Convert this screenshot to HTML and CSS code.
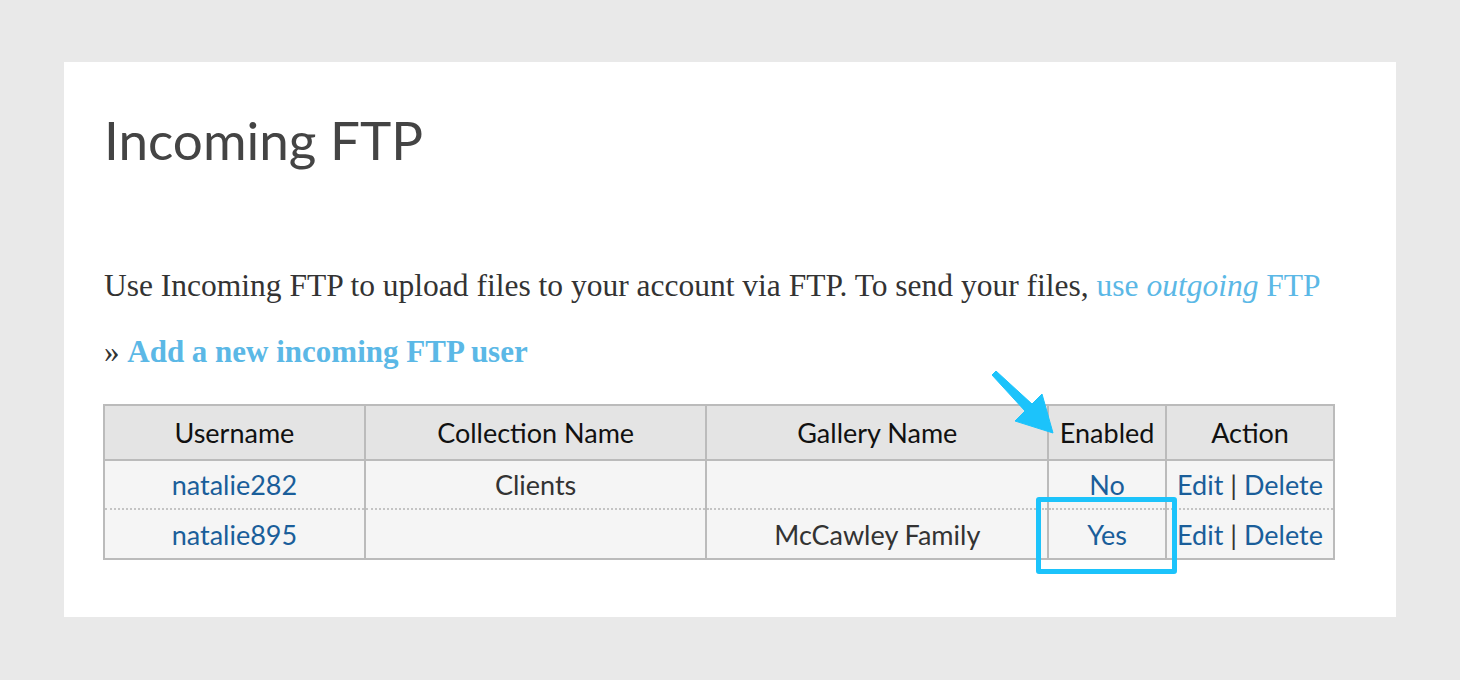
FILE: index.html
```html
<!DOCTYPE html>
<html lang="en">
<head>
  <meta charset="UTF-8">
  <title>Incoming FTP</title>
  <link rel="stylesheet" href="styles.css">
</head>
<body>
  <div class="card">
    <h1>Incoming FTP</h1>

    <p class="intro">Use Incoming FTP to upload files to your account via FTP. To send your files, <a href="#" class="light">use <em>outgoing</em> FTP</a></p>

    <p class="add">&raquo; <a href="#" class="light">Add a new incoming FTP user</a></p>

    <table class="ftp">
      <tr>
        <th class="c-user">Username</th>
        <th class="c-coll">Collection Name</th>
        <th class="c-gal">Gallery Name</th>
        <th class="c-en">Enabled</th>
        <th class="c-act">Action</th>
      </tr>
      <tr>
        <td><a href="#">natalie282</a></td>
        <td>Clients</td>
        <td></td>
        <td><a href="#">No</a></td>
        <td><a href="#">Edit</a> | <a href="#">Delete</a></td>
      </tr>
      <tr class="dotted">
        <td><a href="#">natalie895</a></td>
        <td></td>
        <td>McCawley Family</td>
        <td><a href="#">Yes</a></td>
        <td><a href="#">Edit</a> | <a href="#">Delete</a></td>
      </tr>
    </table>

    <!-- callout drawn over the table -->
    <svg class="arrow" width="80" height="80" viewBox="0 0 80 80">
      <path d="M0 4 L4 0 L40 33 L50 23 L61 62 L23 50 L33 40 Z" fill="#1cc3fb" stroke="#1cc3fb" stroke-width="1" stroke-linejoin="round"/>
    </svg>
    <div class="highlight"></div>
  </div>
</body>
</html>
```

FILE: styles.css
```css
body {
  margin: 0;
  background-color: #e9e9e9;
  padding: 62px 0 0 64px;
}
.card {
  position: relative;
  width: 1332px;
  height: 555px;
  box-sizing: border-box;
  background: white;
  padding: 38px 61px 0 40px;
}
h1 {
  font-family: Lato, sans-serif;
  font-weight: normal;
  font-size: 53px;
  color: #444;
  margin: 0;
  line-height: 80px;
}
.intro {
  font-family: "Liberation Serif", serif;
  font-size: 31.5px;
  color: #333;
  margin: 86px 0 0;
  line-height: 40px;
}
.add {
  font-family: "Liberation Serif", serif;
  font-size: 31px;
  color: #333;
  margin: 26px 0 0;
  line-height: 40px;
}
.add a {
  font-weight: bold;
}
a.light {
  color: #5bb8e6;
  text-decoration: none;
}
table.ftp {
  margin-top: 32px;
  margin-left: -1px;
  table-layout: fixed;
  border-collapse: collapse;
  font-family: Lato, sans-serif;
  font-size: 27px;
  color: #333;
  text-align: center;
}
.ftp th {
  font-weight: normal;
  color: #111;
  background: #e4e4e4;
  border: 2px solid #bbb;
  height: 53px;
  padding: 0;
}
.ftp td {
  background: #f5f5f5;
  border-left: 2px solid #bbb;
  border-right: 2px solid #bbb;
  height: 47px;
  padding: 0;
}
.ftp tr:last-child td {
  border-bottom: 2px solid #bbb;
  height: 48px;
}
.ftp tr.dotted td {
  border-top: 2px dotted #c4c4c4;
}
.ftp a {
  color: #1a5e9a;
  text-decoration: none;
}
.c-user { width: 259px; }
.c-coll { width: 340px; }
.c-gal { width: 340px; }
.c-en { width: 116px; }
.c-act { width: 166px; }
.arrow {
  position: absolute;
  left: 928px;
  top: 309px;
}
.highlight {
  position: absolute;
  left: 972px;
  top: 435px;
  width: 131px;
  height: 67px;
  border: 5px solid #1cc3fb;
  border-radius: 3px;
}
```
